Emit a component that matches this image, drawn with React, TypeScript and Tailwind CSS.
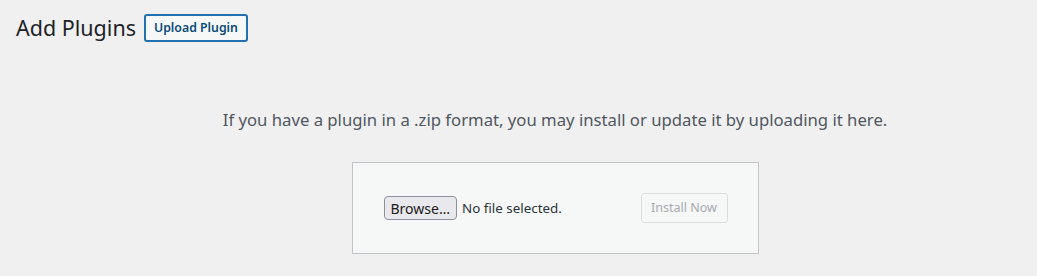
export default function App() {
  return (
    <div
      className="w-full h-[276px] bg-[#f0f0f1] text-[#1d2327] overflow-hidden"
      style={{ fontFamily: '"Noto Sans", sans-serif' }}
    >
      <div className="flex items-center pl-4 pt-[13px]">
        <h1 className="text-[21.5px] leading-[30px] font-normal text-[#1d2327]">Add Plugins</h1>
        <button className="ml-[8px] h-[28px] px-[8px] rounded-[3px] border-2 border-[#2271b1] bg-[#f6f7f7] text-[12.3px] font-semibold text-[#0a4b78]">
          Upload Plugin
        </button>
      </div>

      <div className="pl-[73px] text-center">
        <p className="mt-[65px] text-[16.7px] leading-[24px] text-[#50575e]">
          If you have a plugin in a .zip format, you may install or update it by uploading it here.
        </p>
        <div className="inline-flex mt-[30px] w-[407px] h-[92px] items-center justify-between border border-[#c3c4c7] bg-[#f6f7f7] pl-[31px] pr-[30px]">
          <div className="flex items-center">
            <span className="h-[24px] px-[6px] flex items-center rounded-[4px] border border-[#8f8f9d] bg-[#e9e9ed] text-[14px] text-[#1b1b1b]">
              Browse…
            </span>
            <span className="ml-[5px] text-[13.4px] text-[#2c3338]">No file selected.</span>
          </div>
          <button
            disabled
            className="h-[30px] w-[87px] rounded-[3px] border border-[#dcdcde] bg-[#f6f7f7] text-[12.5px] text-[#a7aaad]"
          >
            Install Now
          </button>
        </div>
      </div>
    </div>
  );
}
